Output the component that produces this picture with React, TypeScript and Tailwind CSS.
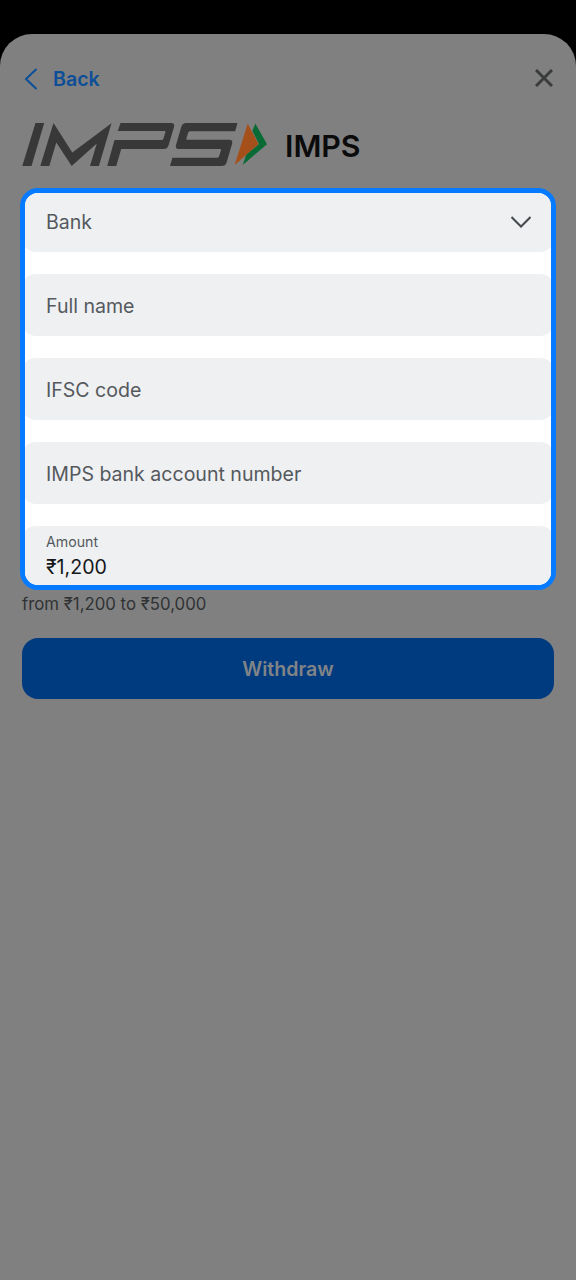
import type { ReactNode } from "react";

const fields = [
  { id: "bank", label: "Bank", select: true },
  { id: "name", label: "Full name" },
  { id: "ifsc", label: "IFSC code" },
  { id: "account", label: "IMPS bank account number" },
  { id: "amount", label: "Amount", value: "₹1,200" }
];

function ImpsLogo() {
  return (
    <svg viewBox="22 122 246 46" className="h-[46px] w-[246px] shrink-0" role="img" aria-label="IMPS">
      <g fill="#383838">
        <path d="M35.500 123h8.700L31.500 166h-9.200z" />
        <path d="M53.500 123l18.800 29.500 39.200-29.300-12.600 42.800H90l6.800-22.600-25.100 22.600-15.400-23.500-7 23.500h-9z" />
        <path d="M120.500 123h50.500q4 0 3 4l-5.500 18.400q-1.200 3.500-5 3.500H121.200L116.200 166h-9l7.300-26h47.600l1.200-1 2.200-7-.5-1h-47.200z" />
        <path d="M237.500 123l-2.400 8.200h-45.600l-1.200 1-2 6.600.6 1h42.600q3.600 0 2.600 4l-5.500 18.700q-1.200 3.500-5 3.500H170l2.400-8.200h45.300l1.200-1 2.200-6.800-.6-1h-41.800q-3.800 0-2.700-4l5.400-18.500q1.200-3.500 5-3.500z" />
      </g>
      <path d="M255.300 123.500l11.700 20.700-24.300 20.800 3.600-10.400 12.700-10.600-6.600-13z" fill="#086a34" />
      <path d="M247.700 123.500L258.500 144l-23.800 21z" fill="#a5501a" />
    </svg>
  );
}

function Field({ children }: { children: ReactNode }) {
  return (
    <div className="flex h-[62px] shrink-0 items-center justify-between rounded-[14px] bg-[#eef0f2] px-6 text-[19.560px] text-[#55595d]">
      {children}
    </div>
  );
}

export default function App() {
  return (
    <div className="h-[1280px] w-full bg-black pt-[34px] font-['Inter',sans-serif]">
      <main className="flex h-full flex-col rounded-t-[32px] bg-[#808080] px-5">
        <header className="flex h-[88px] items-center justify-between pt-0.5 pr-[3px] pl-1">
          <button type="button" className="flex items-center gap-[15px] text-[19.600px] font-semibold text-[#0c4f98]">
            <svg viewBox="0 0 14 22" className="h-[22px] w-[14px]" fill="none" stroke="currentColor" strokeWidth="2" aria-hidden>
              <path d="M12.500 1L2 11l10.500 10" />
            </svg>
            <span className="pt-0.5">Back</span>
          </button>
          <button type="button" aria-label="Close" className="text-[#3a3b3c]">
            <svg viewBox="0 0 18 18" className="mb-0.5 h-[18px] w-[18px]" fill="none" stroke="currentColor" strokeWidth="3" aria-hidden>
              <path d="M1 1l16 16M17 1L1 17" />
            </svg>
          </button>
        </header>

        <div className="flex h-[66px] items-start gap-[17px] pl-0.5">
          <ImpsLogo />
          <h1 className="pt-1 text-[30.300px] leading-[41px] font-semibold text-[#0b0b0c]">IMPS</h1>
        </div>

        {/* Highlighted form, clipped to the frame */}
        <section className="h-[402px] shrink-0 overflow-hidden rounded-[18px] border-[5px] border-[#067bff] bg-white">
          <div className="-mx-[3px] -mt-[3px] flex flex-col gap-[22px]">
            {fields.map((field) => (
              <Field key={field.id}>
                {field.value ? (
                  <div className="pb-px">
                    <div className="text-[14.200px] leading-[20px]">{field.label}</div>
                    <div className="text-[19.600px] leading-[30px] text-[#15171a]">{field.value}</div>
                  </div>
                ) : (
                  <span className="pt-1">{field.label}</span>
                )}
                {field.select && (
                  <svg viewBox="0 0 20 12" className="mt-0.5 -mr-px h-3 w-5" fill="none" stroke="#46494d" strokeWidth="2" aria-hidden>
                    <path d="M.5 1l9.500 9.500L19.500 1" />
                  </svg>
                )}
              </Field>
            ))}
          </div>
        </section>

        <p className="mt-0.5 pl-0.5 text-[16.800px] leading-[24px] text-[#303234]">from ₹1,200 to ₹50,000</p>

        <button
          type="button"
          className="mx-0.5 mt-[22px] h-[61px] rounded-[16px] bg-[#003b80] pt-0.5 text-[19.600px] font-semibold text-[#808487]"
        >
          Withdraw
        </button>
      </main>
    </div>
  );
}
